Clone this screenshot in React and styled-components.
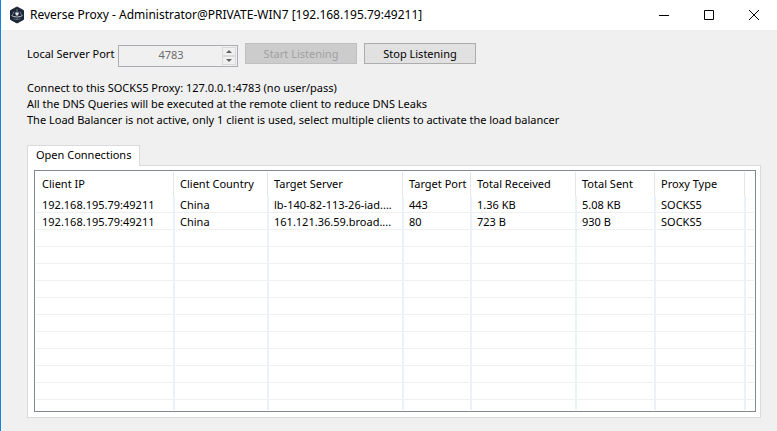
import React, { useState } from 'react';
import styled, { createGlobalStyle } from 'styled-components';

const GlobalStyle = createGlobalStyle`
    * {
        box-sizing: border-box;
    }

    body {
        margin: 0;
        background-color: #f0f0f0;
    }

    body, button, input {
        font-family: 'Noto Sans', 'Open Sans', sans-serif;
        font-size: 11px;
        line-height: 16px;
        color: #000;
    }
`;

const Window = styled.div`
    display: flex;
    flex-direction: column;
    height: 100vh;
    border-left: 1px solid #1883d7;
    background-color: #f0f0f0;
`;

const TitleBar = styled.header`
    display: flex;
    align-items: center;
    height: 30px;
    padding-left: 8px;
    background-color: #fff;
`;

const Title = styled.h1`
    flex: 1;
    margin: 0 0 0 5px;
    font-size: 12px;
    font-weight: 400;
    white-space: nowrap;
`;

const WindowButton = styled.button`
    display: flex;
    align-items: center;
    justify-content: center;
    width: 45px;
    height: 28px;
    padding: 0;
    border: none;
    background: none;
`;

const Content = styled.main`
    display: flex;
    flex: 1;
    flex-direction: column;
    min-height: 0;
    padding: 13px 16px 13px 26px;
`;

const Toolbar = styled.div`
    display: flex;
    align-items: flex-start;
    gap: 7px;
`;

const PortLabel = styled.label`
    width: 84px;
    line-height: 22px;
    white-space: nowrap;
`;

const PortBox = styled.div`
    display: flex;
    width: 120px;
    height: 22px;
    margin-top: 2px;
    padding: 1px;
    border: 1px solid #abadb3;
`;

const PortInput = styled.input`
    flex: 1;
    min-width: 0;
    padding: 0 0 3px;
    border: none;
    background: none;
    color: #6d6d6d;
    text-align: center;
`;

const Spinner = styled.div`
    display: grid;
    grid-template-rows: 1fr 1fr;
    width: 14px;
`;

const SpinButton = styled.button`
    display: flex;
    align-items: center;
    justify-content: center;
    padding: 0;
    border: 1px solid #dadada;
    background-color: #f0f0f0;
`;

const Button = styled.button`
    width: 112px;
    height: 21px;
    padding: 0;
    border: 1px solid #adadad;
    background-color: #e1e1e1;

    &:disabled {
        border-color: #bfbfbf;
        background-color: #ccc;
        color: #a0a0a0;
    }
`;

const Info = styled.div`
    margin-top: 13px;
    white-space: nowrap;
`;

const InfoLine = styled.p`
    margin: 0;
`;

const Tab = styled.button`
    position: relative;
    z-index: 1;
    align-self: flex-start;
    height: 21px;
    margin: 17px 0 -1px;
    padding: 0 8px 2px;
    border: 1px solid #dadada;
    border-bottom: none;
    background-color: #fff;
`;

const TabPanel = styled.section`
    display: flex;
    flex: 1;
    min-height: 0;
    padding: 4px 4px 5px 6px;
    border: 1px solid #dadada;
    background-color: #fff;
`;

const ListFrame = styled.div`
    flex: 1;
    min-width: 0;
    padding: 1px;
    border: 1px solid #828790;
`;

const ListView = styled.div`
    height: 100%;
    overflow: hidden;
`;

const Table = styled.table`
    width: 100%;
    table-layout: fixed;
    border-collapse: separate;
    border-spacing: 0;
`;

const HeaderCell = styled.th`
    width: ${props => props.$width ? `${props.$width}px` : 'auto'};
    height: 24px;
    padding: 0 0 0 6px;
    border-right: ${props => props.$width ? '1px solid #e5e5e5' : 'none'};
    font-weight: 400;
    text-align: left;
    white-space: nowrap;
`;

const Cell = styled.td`
    height: 17px;
    padding: 2px 0 0 5px;
    border: 0 solid #ebf1fa;
    border-width: 0 1px 1px;
    border-bottom-color: #f0f0f0;
    line-height: 14px;
    white-space: nowrap;

    &:first-child {
        padding-left: 6px;
        border-left: none;
    }

    &:last-child {
        border-right: none;
    }
`;

const columns = [
    { title: 'Client IP', width: 138 },
    { title: 'Client Country', width: 94 },
    { title: 'Target Server', width: 135 },
    { title: 'Target Port', width: 68 },
    { title: 'Total Received', width: 105 },
    { title: 'Total Sent', width: 79 },
    { title: 'Proxy Type', width: 90 },
];

const connections = [
    ['192.168.195.79:49211', 'China', 'lb-140-82-113-26-iad....', '443', '1.36 KB', '5.08 KB', 'SOCKS5'],
    ['192.168.195.79:49211', 'China', '161.121.36.59.broad....', '80', '723 B', '930 B', 'SOCKS5'],
];

// the grid lines go on below the last connection
const EMPTY_ROWS = 60;

const Logo = () => (
    <svg width="16" height="18" viewBox="0 0 16 18" aria-hidden="true">
        <path d="M8 1l6.500 3.500v9L8 17l-6.500-3.500v-9z" fill="#1c2636" stroke="#1c2636" strokeLinejoin="round" />
        <path d="M8 3v4M5 5.500L3.500 9M11 5.500L12.500 9" stroke="#6f7b8b" fill="none" />
        <path d="M2.500 9.500c2 2 9 2 11 0" stroke="#c3cad3" fill="none" />
        <path d="M4.500 12.500c2 1.500 5 1.500 7 0M8 10v4" stroke="#5f6b7b" fill="none" />
        <path d="M6 6.500h4L9 9.500H7z" fill="#dfe4ea" />
    </svg>
);

const App = () => {
    const [port, setPort] = useState('4783');
    const [listening, setListening] = useState(true);

    const changePort = (step) => setPort(String(Number(port) + step));

    return (
        <Window>
            <GlobalStyle />
            <TitleBar>
                <Logo />
                <Title>Reverse Proxy - Administrator@PRIVATE-WIN7 [192.168.195.79:49211]</Title>
                <WindowButton aria-label="Minimize">
                    <svg width="11" height="11"><path d="M0 5.500h10" stroke="#000" /></svg>
                </WindowButton>
                <WindowButton aria-label="Maximize">
                    <svg width="11" height="11"><path d="M.5.5h9v9h-9z" stroke="#000" fill="none" /></svg>
                </WindowButton>
                <WindowButton aria-label="Close">
                    <svg width="11" height="11"><path d="M0 0l10 10M10 0L0 10" stroke="#000" /></svg>
                </WindowButton>
            </TitleBar>
            <Content>
                <Toolbar>
                    <PortLabel htmlFor="port">Local Server Port</PortLabel>
                    <PortBox>
                        <PortInput id="port" value={port} disabled={listening} onChange={(e) => setPort(e.target.value)} />
                        <Spinner>
                            <SpinButton aria-label="Increase" disabled={listening} onClick={() => changePort(1)}>
                                <svg width="6" height="3"><path d="M0 3l3-3 3 3z" fill="#606060" /></svg>
                            </SpinButton>
                            <SpinButton aria-label="Decrease" disabled={listening} onClick={() => changePort(-1)}>
                                <svg width="6" height="3"><path d="M0 0l3 3 3-3z" fill="#606060" /></svg>
                            </SpinButton>
                        </Spinner>
                    </PortBox>
                    <Button disabled={listening} onClick={() => setListening(true)}>Start Listening</Button>
                    <Button disabled={!listening} onClick={() => setListening(false)}>Stop Listening</Button>
                </Toolbar>
                <Info>
                    <InfoLine>Connect to this SOCKS5 Proxy: 127.0.0.1:4783 (no user/pass)</InfoLine>
                    <InfoLine>All the DNS Queries will be executed at the remote client to reduce DNS Leaks</InfoLine>
                    <InfoLine>The Load Balancer is not active, only 1 client is used, select multiple clients to activate the load balancer</InfoLine>
                </Info>
                <Tab>Open Connections</Tab>
                <TabPanel>
                    <ListFrame>
                        <ListView>
                            <Table>
                                <thead>
                                    <tr>
                                        {columns.map((column) => (
                                            <HeaderCell key={column.title} $width={column.width}>{column.title}</HeaderCell>
                                        ))}
                                        <HeaderCell />
                                    </tr>
                                </thead>
                                <tbody>
                                    {connections.map((row, index) => (
                                        <tr key={index}>
                                            {row.map((value, i) => <Cell key={i}>{value}</Cell>)}
                                            <Cell />
                                        </tr>
                                    ))}
                                    {[...Array(EMPTY_ROWS)].map((_, index) => (
                                        <tr key={index}>
                                            {columns.map((column) => <Cell key={column.title} />)}
                                            <Cell />
                                        </tr>
                                    ))}
                                </tbody>
                            </Table>
                        </ListView>
                    </ListFrame>
                </TabPanel>
            </Content>
        </Window>
    );
};

export default App;
